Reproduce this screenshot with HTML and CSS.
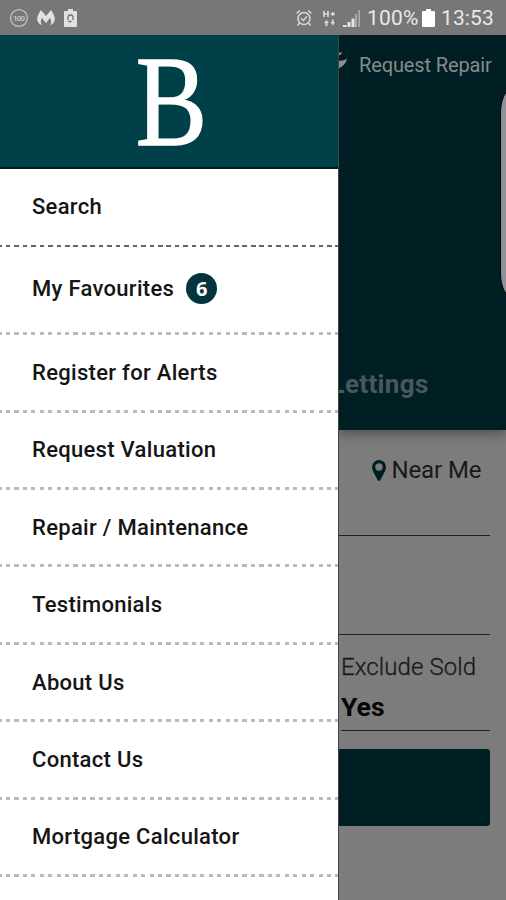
FILE: index.html
```html
<!DOCTYPE html>
<html lang="en">
<head>
<meta charset="utf-8">
<meta name="viewport" content="width=device-width">
<title>Menu</title>
<link rel="stylesheet" href="styles.css">
</head>
<body>
<header class="status">
  <div class="status-left">
    <svg class="ic-100" width="20" height="20" viewBox="0 0 20 20"><circle cx="10" cy="10" r="8.4" fill="none" stroke="#c4c4c4" stroke-width="1.3"/><text x="10" y="12.8" text-anchor="middle" textLength="12" class="tiny">100</text></svg>
    <svg class="ic-m" width="18" height="16" viewBox="0 0 18 16"><path d="M4 0C1 4-1 9 1 12c1 2 3 3 4 3C3 12 4 10 5 8l4 5 4-5c1 2 2 4 0 7 1 0 3-1 4-3 2-3 0-8-3-12L9 6z" fill="#e2e2e2"/></svg>
    <svg class="ic-b" width="13" height="18" viewBox="0 0 13 18"><path d="M1 2h3V0h5v2h3q1 0 1 1v14q0 1-1 1H1q-1 0-1-1V3q0-1 1-1z" fill="#e0e0e0"/><path d="M4 11V8.500Q4 6 6.500 6T9 8.500V11M4 12.500h3.500" fill="none" stroke="#777" stroke-width="1.300"/></svg>
  </div>
  <div class="status-right">
    <svg class="ic-alarm" width="18" height="18" viewBox="0 0 18 18" fill="none" stroke="#dadada" stroke-width="1.500"><circle cx="9" cy="9.500" r="6"/><path d="M1.500 4.500L5 1.500M13 1.500l3.500 3M4.500 14l-2 2.500M13.500 14l2 2.500M6 9.500l2.300 2 3.700-4"/></svg>
    <svg class="ic-net" width="13" height="17" viewBox="0 0 13 17"><path d="M1 1v6M5 1v6M1 4h4M7.500 4H12M9.800 2v4" stroke="#d8d8d8" stroke-width="1.700" fill="none"/><path d="M1 13l2.500-3L6 13H4.500v3h-2v-3zM7.500 12l2.300 3.500L12 12h-1.300V9.500H8.800V12z" fill="#d8d8d8"/></svg>
    <svg class="ic-sig" width="18" height="17" viewBox="0 0 18 17"><path d="M0 17v-2h3.500v2zM4.500 17v-5h3v5zM8.500 17V8.500h3V17z" fill="#e6e6e6"/><path d="M12 17V4h2v13zM15.300 17V0H17v17z" fill="#aaa"/></svg>
    <span class="pct">100%</span>
    <svg class="ic-batt" width="13" height="18" viewBox="0 0 13 18"><path d="M1 2h3V0h5v2h3q1 0 1 1v14q0 1-1 1H1q-1 0-1-1V3q0-1 1-1z" fill="#fff"/></svg>
    <span class="clock">13:53</span>
  </div>
</header>
<div class="screen">
  <nav class="drawer">
    <div class="brand"><span class="logo">B</span></div>
    <ul class="menu">
      <li class="first"><span>Search</span></li>
      <li class="tall"><span>My Favourites</span><b class="count">6</b></li>
      <li><span>Register for Alerts</span></li>
      <li><span>Request Valuation</span></li>
      <li><span>Repair / Maintenance</span></li>
      <li><span>Testimonials</span></li>
      <li><span>About Us</span></li>
      <li><span>Contact Us</span></li>
      <li><span>Mortgage Calculator</span></li>
    </ul>
  </nav>
  <main class="page">
    <section class="hero">
      <div class="repair"><svg width="10" height="22" viewBox="0 0 10 22"><path d="M0 1L4 0 2.500 3H0zM0 8.500q5 1 9-2-1 5-4 7-2 2-5 3z" fill="#8b8f90"/></svg><span>Request Repair</span></div>
      <div class="tab">Lettings</div>
      <i class="edge"></i>
    </section>
    <section class="form">
      <div class="near"><svg width="14" height="21" viewBox="0 0 14 21"><path fill-rule="evenodd" d="M7 0a7 7 0 0 0-7 7c0 3 1.500 5 3 8l2.500 5q1.500 2 3 0L11 15c1.500-3 3-5 3-8a7 7 0 0 0-7-7zm0 3.300a3.700 3.700 0 1 1 0 7.400 3.700 3.700 0 0 1 0-7.400z" fill="#001f25"/></svg><span>Near Me</span></div>
      <div class="field"></div>
      <div class="sold"><span class="label">Exclude Sold</span><span class="value">Yes</span></div>
      <div class="button"></div>
    </section>
  </main>
</div>
</body>
</html>
```
FILE: styles.css
```css
* { box-sizing: border-box; }
body {
  margin: 0;
  width: 506px;
  height: 900px;
  overflow: hidden;
  font-family: Roboto, "Liberation Sans", sans-serif;
  background: #7c7c7c;
}
svg { display: block; flex: none; }
.status {
  height: 35px;
  display: flex;
  justify-content: space-between;
  background: #777;
  color: #e8e8e8;
  font-size: 21px;
  line-height: 35px;
}
.status-left, .status-right { display: flex; align-items: center; }
.status-left { padding-left: 9px; }
.tiny { font-size: 8px; font-weight: 700; fill: #c4c4c4; }
.ic-m { margin-left: 8px; }
.ic-b { margin-left: 9px; }
.status-right { padding-right: 12px; padding-top: 1px; }
.ic-alarm { margin-right: 10px; }
.ic-net { margin-right: 7px; }
.ic-sig { margin-right: 6px; }
.pct { width: 55px; letter-spacing: .2px; white-space: nowrap; }
.ic-batt { margin-right: 6px; }
.clock { width: 53px; letter-spacing: .1px; white-space: nowrap; }

.screen { display: flex; height: 865px; }
.drawer { width: 338px; flex: none; background: #fff; }
.brand {
  height: 134px;
  background: #004048;
  border-bottom: 2px solid #001c21;
  display: flex;
  align-items: center;
  justify-content: center;
}
.logo {
  font: 129px/130px "Liberation Serif", serif;
  color: #fff;
  -webkit-text-stroke: 1.4px #fff;
  transform: translate(2.5px, .5px) scaleX(.83);
}
.menu { margin: 0; padding: 0; list-style: none; }
.menu li {
  height: 77.4px;
  padding: 0 0 3px 32px;
  display: flex;
  align-items: center;
  color: #151515;
  font-size: 22px;
  font-weight: 500;
  letter-spacing: .3px;
  white-space: nowrap;
  background: repeating-linear-gradient(90deg, #bbb 0 4.2px, #fff 4.2px 8.45px) -2.6px 100% / 341px 3px no-repeat;
}
.menu .first {
  height: 77.5px;
  background: repeating-linear-gradient(90deg, #666 0 4.6px, #fff 4.6px 8.45px) -2.6px 100% / 341px 2px no-repeat;
}
.menu .tall { height: 88.8px; padding-bottom: 5px; }
.count {
  width: 31px;
  height: 31px;
  margin-left: 12px;
  border-radius: 50%;
  background: #04343c;
  color: #fff;
  font: 700 20px/31px "Open Sans", sans-serif;
  text-align: center;
  letter-spacing: 0;
}

.page { flex: 1; min-width: 0; background: #7c7c7c; border-left: 1px solid #444; overflow: hidden; }
.hero {
  position: relative;
  height: 395px;
  margin-left: -1px;
  background: #001f24;
  box-shadow: 0 3px 12px rgba(0, 0, 0, .4);
}
.repair {
  height: 60px;
  display: flex;
  align-items: center;
  color: #868b8c;
  font-size: 20px;
  letter-spacing: -.13px;
  white-space: nowrap;
}
.repair svg { margin-top: -4px; }
.repair span { margin-left: 11px; }
.tab {
  margin-top: 272px;
  margin-left: -7.5px;
  line-height: 34px;
  font-size: 26px;
  font-weight: 700;
  letter-spacing: .35px;
  color: #48595c;
}
.edge {
  position: absolute;
  right: -14px;
  top: 55px;
  width: 20px;
  height: 206px;
  border: 1px solid #000;
  border-radius: 12px / 28px;
  background: #8c9394;
}
.form { padding-right: 16px; }
.near {
  height: 106px;
  padding: 0 8px 25px 33px;
  border-bottom: 1px solid #222;
  display: flex;
  align-items: center;
  gap: 5.5px;
  font-size: 24px;
  letter-spacing: -.12px;
  color: #191919;
  white-space: nowrap;
}
.field { height: 99px; border-bottom: 1px solid #222; }
.sold {
  height: 96px;
  margin-left: 2px;
  border-bottom: 1px solid #222;
  padding-top: 14px;
  display: flex;
  flex-direction: column;
  color: #191919;
  font-size: 24px;
  line-height: 36px;
  white-space: nowrap;
}
.label { font-weight: 300; letter-spacing: .1px; -webkit-text-stroke: .3px #191919; }
.value { font-size: 26.5px; font-weight: 700; color: #050505; line-height: 43px; }
.button { height: 77px; margin: 18px 0 0 -1px; background: #001f24; border-radius: 0 3px 3px 0; }
```
